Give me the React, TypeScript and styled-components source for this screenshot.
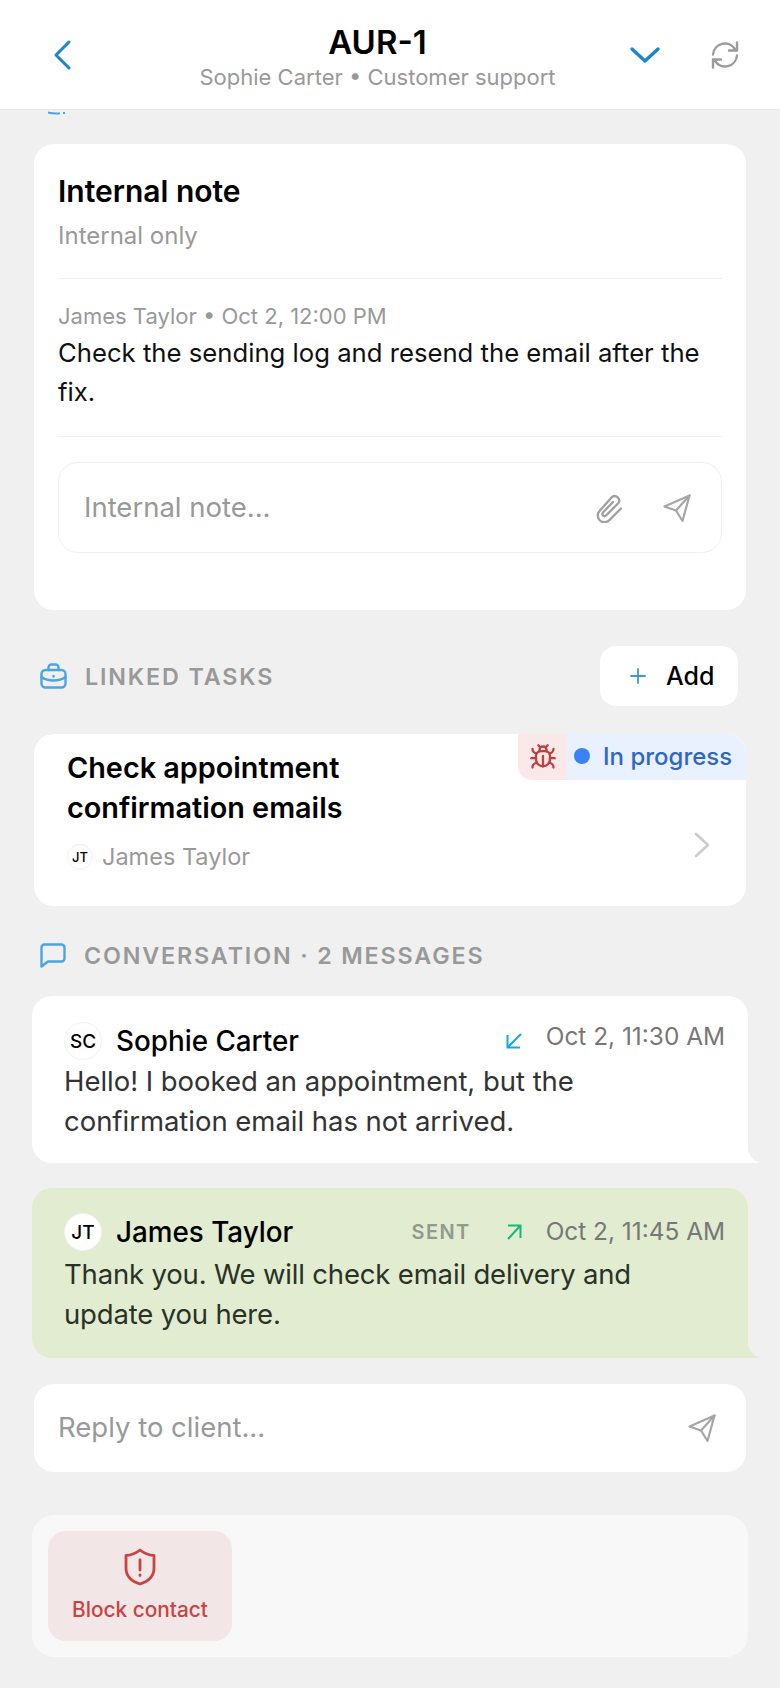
import React from "react";
import styled, { createGlobalStyle } from "styled-components";
import { Bug, Plus } from "lucide-react";

const GlobalStyle = createGlobalStyle`
  html, body {
    margin: 0;
    padding: 0;
    background: #f0f0f0;
    font-family: Inter, "Noto Sans", sans-serif;
  }
  * { box-sizing: border-box; }
`;

const Page = styled.div`
  width: 780px;
  height: 1688px;
  overflow: hidden;
  background: #f0f0f0;
`;

const Header = styled.header`
  height: 110px;
  background: #fff;
  border-bottom: 1px solid #e8e8e8;
  display: grid;
  grid-template-columns: 100px 1fr 136px;
  align-items: center;
  padding: 0 41px 0 52px;
`;

const HeaderLeft = styled.div`
  display: flex;
  align-items: center;
`;

const HeaderCenter = styled.div`
  display: flex;
  flex-direction: column;
  align-items: center;
  padding-top: 5px;
`;

const HeaderRight = styled.div`
  display: flex;
  align-items: center;
  justify-content: flex-end;
  gap: 50px;
`;

const Title = styled.div`
  font-size: 33px;
  font-weight: 600;
  line-height: 36px;
  color: #000;
`;

const Subtitle = styled.div`
  font-size: 22px;
  line-height: 28px;
  color: #999;
  white-space: nowrap;
  margin-top: 3px;
`;

const Clipped = styled.div`
  height: 34px;
  padding: 1px 0 0 48px;
  overflow: hidden;
  display: flex;
  align-items: flex-start;
`;

const Content = styled.main`
  padding: 0 34px;
  display: flex;
  flex-direction: column;
`;

const Card = styled.section`
  background: #fff;
  border-radius: 20px;
  padding: 28px 24px 57px 24px;
`;

const CardTitle = styled.h2`
  margin: 0;
  font-size: 30px;
  line-height: 38px;
  font-weight: 600;
  color: #000;
`;

const Muted = styled.div`
  font-size: 24px;
  line-height: 30px;
  color: #999;
  margin-top: 11px;
`;

const Divider = styled.div`
  height: 1px;
  background: #f0f0f0;
`;

const TopDivider = styled(Divider)`
  margin-top: 27px;
`;

const NoteMeta = styled.div`
  font-size: 22px;
  line-height: 30px;
  color: #999;
  margin-top: 22px;
`;

const NoteBody = styled.p`
  margin: 2px 0 25px;
  font-size: 25.7px;
  line-height: 39px;
  color: #111;
`;

const NoteInput = styled.div`
  margin-top: 25px;
  height: 91px;
  border: 1px solid #f0f0f0;
  border-radius: 20px;
  display: flex;
  align-items: center;
  padding: 0 30px 0 25px;
`;

const Placeholder = styled.div`
  flex: 1;
  font-size: 27.5px;
  color: #999;
  margin-top: -2px;
`;

const InputIcons = styled.div`
  display: flex;
  align-items: center;
  gap: 40px;
`;

const SectionRow = styled.div`
  display: flex;
  align-items: center;
  justify-content: space-between;
  margin-top: 36px;
  padding: 0 8px 0 6px;
`;

const SectionLabel = styled.div`
  display: flex;
  align-items: center;
  gap: 18px;
  font-size: 23.3px;
  font-weight: 600;
  letter-spacing: 1.85px;
  color: #999;
  text-transform: uppercase;
`;

const AddButton = styled.button`
  width: 138px;
  height: 60px;
  border: none;
  border-radius: 16px;
  background: #fff;
  display: flex;
  align-items: center;
  gap: 16px;
  padding: 0 0 0 26px;
  font: 500 25px Inter, sans-serif;
  color: #000;
`;

const TaskCard = styled.article`
  position: relative;
  height: 172px;
  margin-top: 28px;
  background: #fff;
  border-radius: 20px;
  padding: 14px 33px;
`;

const TaskTitle = styled.h3`
  margin: 0;
  font-size: 28.8px;
  line-height: 40px;
  font-weight: 600;
  color: #000;
  width: 340px;
`;

const Assignee = styled.div`
  display: flex;
  align-items: center;
  gap: 9px;
  font-size: 23.5px;
  color: #999;
  margin-top: 14px;
`;

const Avatar = styled.div<{ $size: number; $font: number }>`
  width: ${(p) => p.$size}px;
  height: ${(p) => p.$size}px;
  flex: none;
  border-radius: 50%;
  background: #fff;
  border: 1px solid #f2f2f2;
  display: flex;
  align-items: center;
  justify-content: center;
  font-size: ${(p) => p.$font}px;
  font-weight: 500;
  color: #000;
`;

const TaskBadge = styled.div`
  position: absolute;
  top: 0;
  right: 0;
  width: 228px;
  height: 46px;
  display: flex;
  overflow: hidden;
  border-radius: 0 20px 0 14px;
`;

const BugTag = styled.div`
  width: 49px;
  background: #fbe9e9;
  color: #c04040;
  display: flex;
  align-items: center;
  justify-content: center;
`;

const StatusTag = styled.div`
  flex: 1;
  background: #e8f1fd;
  color: #3068c0;
  display: flex;
  align-items: center;
  gap: 13px;
  padding: 0 0 2px 7px;
  font-size: 24px;
  font-weight: 500;
`;

const StatusDot = styled.span`
  width: 16px;
  height: 16px;
  border-radius: 50%;
  background: #3b82f6;
`;

const TaskChevron = styled.svg`
  position: absolute;
  right: 36px;
  top: 98px;
`;

const ConversationRow = styled(SectionRow)`
  margin-top: 35px;
`;

const Bubble = styled.article<{ $sent?: boolean }>`
  position: relative;
  width: 716px;
  margin: ${(p) => (p.$sent ? "25px" : "26px")} 0 0 -2px;
  height: ${(p) => (p.$sent ? "170px" : "167px")};
  background: ${(p) => (p.$sent ? "#e1ecd0" : "#fff")};
  border-radius: 20px 20px 0 20px;
  padding: ${(p) => (p.$sent ? "25px" : "26px")} 23px 0 32px;
`;

const BubbleTail = styled.svg`
  position: absolute;
  right: -12px;
  bottom: 0;
`;

const BubbleHead = styled.div`
  display: flex;
  align-items: center;
`;

const SenderName = styled.div`
  font-size: 27.8px;
  font-weight: 500;
  color: #000;
  margin-left: 14px;
  flex: 1;
`;

const SentLabel = styled.div`
  font-size: 20px;
  font-weight: 600;
  letter-spacing: 1.4px;
  color: #929a8c;
  margin-right: 34px;
`;

const Stamp = styled.div`
  font-size: 24.4px;
  color: #777;
  margin-left: 23px;
  margin-top: -10px;
`;

const SentStamp = styled(Stamp)`
  margin-top: -2px;
`;

const BubbleBody = styled.p<{ $sent?: boolean }>`
  margin: ${(p) => (p.$sent ? "3px" : "1px")} 0 0;
  font-size: 27.5px;
  line-height: 40px;
  letter-spacing: ${(p) => (p.$sent ? "-0.17px" : "-0.03px")};
  color: ${(p) => (p.$sent ? "#2a3226" : "#333")};
  width: 590px;
`;

const ReplyBox = styled.div`
  margin-top: 26px;
  height: 88px;
  background: #fff;
  border-radius: 20px;
  display: flex;
  align-items: center;
  padding: 0 30px 0 24px;
`;

const ActionPanel = styled.div`
  margin: 43px 0 0 -2px;
  width: 716px;
  height: 142px;
  background: #f8f8f8;
  border-radius: 22px;
  padding: 16px;
`;

const BlockButton = styled.button`
  width: 184px;
  height: 110px;
  border: none;
  border-radius: 18px;
  background: #f3e6e6;
  color: #c84444;
  display: flex;
  flex-direction: column;
  align-items: center;
  padding: 17px 0 0;
  gap: 11px;
  font: 500 20.8px Inter, sans-serif;
`;

const SendIcon = () => (
  <svg width="28" height="28" viewBox="0 0 28 28" fill="none" stroke="#a6a6a6" strokeWidth="2.2" strokeLinejoin="round" strokeLinecap="round">
    <path d="M26.5 1.5 1.5 12.5 13 16.5 19.5 27Z" />
    <path d="M26.5 1.5 13 16.5" />
  </svg>
);

const ClipIcon = () => (
  <svg width="28" height="30" viewBox="0 0 28 30" fill="none" stroke="#a0a0a0" strokeWidth="2.3" strokeLinecap="round" strokeLinejoin="round">
    <path d="M26 15.5 14.5 27a6.500 6.500 0 0 1-10-9L17 4a4.500 4.500 0 0 1 6.500 6L11 22.500a2 2 0 0 1-3-3L18 9" />
  </svg>
);

const RefreshIcon = () => (
  <svg width="28" height="28" viewBox="0 0 28 28" fill="none" stroke="#9b9b9b" strokeWidth="2.4" strokeLinecap="round" strokeLinejoin="round">
    <path d="M2 13.500A12 12 0 0 1 24 8" />
    <path d="M26 1.500v8h-8" />
    <path d="M26 14.500A12 12 0 0 1 4 20" />
    <path d="M2 26.500v-8h8" />
  </svg>
);

const BackIcon = () => (
  <svg width="20" height="32" viewBox="0 0 20 32" fill="none" stroke="#1a87c9" strokeWidth="3" strokeLinecap="round" strokeLinejoin="round">
    <path d="M17 3 4 16l13 13" />
  </svg>
);

const DownIcon = () => (
  <svg width="32" height="20" viewBox="0 0 32 20" fill="none" stroke="#1a87c9" strokeWidth="3.400" strokeLinecap="round" strokeLinejoin="round">
    <path d="M3 4 16 16 29 4" />
  </svg>
);

const BriefcaseIcon = () => (
  <svg width="27" height="26" viewBox="0 0 27 26" fill="none" stroke="#4aa5e0" strokeWidth="2.400" strokeLinecap="round" strokeLinejoin="round">
    <rect x="1.500" y="7" width="24" height="17.500" rx="4" />
    <path d="M8.500 7V4.500a3 3 0 0 1 3-3h4a3 3 0 0 1 3 3V7" />
    <path d="M1.500 14c3.500 2.500 7.500 3.500 12 3.500s8.500-1 12-3.500" />
    <path d="M13.500 13v.5" />
  </svg>
);

const ChatIcon = () => (
  <svg width="26" height="25" viewBox="0 0 26 25" fill="none" stroke="#4aa5e0" strokeWidth="2.400" strokeLinejoin="round" strokeLinecap="round">
    <path d="M4.500 1.500h17a3 3 0 0 1 3 3v11a3 3 0 0 1-3 3H8l-6.500 5V4.500a3 3 0 0 1 3-3Z" />
  </svg>
);

const ArrowIn = () => (
  <svg width="18" height="18" viewBox="0 0 18 18" fill="none" stroke="#14a8e0" strokeWidth="2">
    <path d="M16 2 3 15M2.500 3v12.500H15" />
  </svg>
);

const ArrowOut = () => (
  <svg width="18" height="18" viewBox="0 0 18 18" fill="none" stroke="#14b87a" strokeWidth="2">
    <path d="M3 16 15 3M3 2.500h12.500V15" />
  </svg>
);

const ShieldIcon = () => (
  <svg width="32" height="38" viewBox="0 0 32 38" fill="none" stroke="#c84444" strokeWidth="2.800" strokeLinecap="round" strokeLinejoin="round">
    <path d="M16 2c3 2.500 7.500 5 14 5.500V20c0 8-6 13.500-14 16C8 33.500 2 28 2 20V7.500C8.500 7 13 4.500 16 2Z" />
    <path d="M16 12v10M16 27v.5" />
  </svg>
);

export default function App() {
  return (
    <Page>
      <GlobalStyle />
      <Header>
        <HeaderLeft>
          <BackIcon />
        </HeaderLeft>
        <HeaderCenter>
          <Title>AUR-1</Title>
          <Subtitle>Sophie Carter • Customer support</Subtitle>
        </HeaderCenter>
        <HeaderRight>
          <DownIcon />
          <RefreshIcon />
        </HeaderRight>
      </Header>
      <Clipped>
        <svg width="20" height="4" viewBox="0 0 20 4" fill="none" stroke="#4aa5e0" strokeWidth="2">
          <path d="M0 1.500C3 2.500 7 2.500 12 2.500M16 1v2" />
        </svg>
      </Clipped>
      <Content>
        <Card>
          <CardTitle>Internal note</CardTitle>
          <Muted>Internal only</Muted>
          <TopDivider />
          <NoteMeta>James Taylor • Oct 2, 12:00 PM</NoteMeta>
          <NoteBody>Check the sending log and resend the email after the fix.</NoteBody>
          <Divider />
          <NoteInput>
            <Placeholder>Internal note...</Placeholder>
            <InputIcons>
              <ClipIcon />
              <SendIcon />
            </InputIcons>
          </NoteInput>
        </Card>

        <SectionRow>
          <SectionLabel>
            <BriefcaseIcon />
            Linked tasks
          </SectionLabel>
          <AddButton>
            <Plus size={24} color="#3a9ad9" strokeWidth={1.8} />
            Add
          </AddButton>
        </SectionRow>

        <TaskCard>
          <TaskTitle>Check appointment confirmation emails</TaskTitle>
          <Assignee>
            <Avatar $size={26} $font={13}>JT</Avatar>
            James Taylor
          </Assignee>
          <TaskBadge>
            <BugTag>
              <Bug size={28} strokeWidth={2} />
            </BugTag>
            <StatusTag>
              <StatusDot />
              In progress
            </StatusTag>
          </TaskBadge>
          <TaskChevron width="16" height="26" viewBox="0 0 16 26" fill="none" stroke="#ccc" strokeWidth="2.600" strokeLinecap="round" strokeLinejoin="round">
            <path d="M2 2 14 13 2 24" />
          </TaskChevron>
        </TaskCard>

        <ConversationRow>
          <SectionLabel>
            <ChatIcon />
            Conversation · 2 messages
          </SectionLabel>
        </ConversationRow>

        <Bubble>
          <BubbleHead>
            <Avatar $size={38} $font={19}>SC</Avatar>
            <SenderName>Sophie Carter</SenderName>
            <ArrowIn />
            <Stamp>Oct 2, 11:30 AM</Stamp>
          </BubbleHead>
          <BubbleBody>Hello! I booked an appointment, but the confirmation email has not arrived.</BubbleBody>
          <BubbleTail width="12" height="12" viewBox="0 0 12 12" fill="#fff">
            <path d="M0 0C2 5 6 10 12 12H0Z" />
          </BubbleTail>
        </Bubble>

        <Bubble $sent>
          <BubbleHead>
            <Avatar $size={38} $font={19}>JT</Avatar>
            <SenderName>James Taylor</SenderName>
            <SentLabel>SENT</SentLabel>
            <ArrowOut />
            <SentStamp>Oct 2, 11:45 AM</SentStamp>
          </BubbleHead>
          <BubbleBody $sent>Thank you. We will check email delivery and update you here.</BubbleBody>
          <BubbleTail width="12" height="12" viewBox="0 0 12 12" fill="#e1ecd0">
            <path d="M0 0C2 5 6 10 12 12H0Z" />
          </BubbleTail>
        </Bubble>

        <ReplyBox>
          <Placeholder>Reply to client...</Placeholder>
          <SendIcon />
        </ReplyBox>

        <ActionPanel>
          <BlockButton>
            <ShieldIcon />
            Block contact
          </BlockButton>
        </ActionPanel>
      </Content>
    </Page>
  );
}
